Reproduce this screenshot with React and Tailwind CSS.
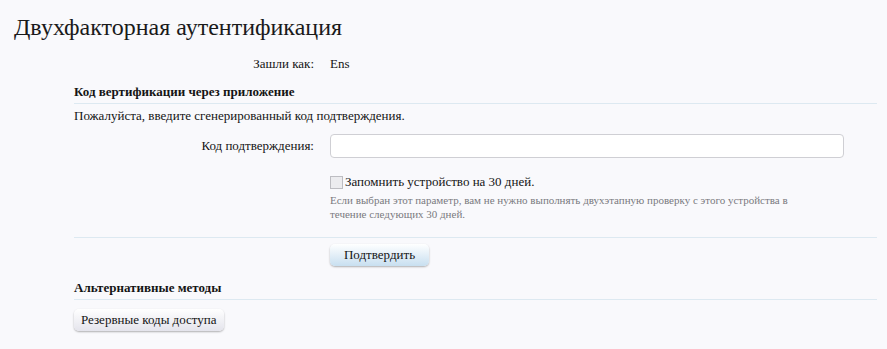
export default function App() {
  return (
    <div className="min-h-[349px] bg-[#f9f9fc] text-[#141414] font-serif pt-[12px]">
      {/* Page title */}
      <h1 className="pl-[14px] text-[24px] leading-[30px] text-[#1a1a1a] [font-family:Times_New_Roman,Liberation_Serif,Tinos,serif]">
        Двухфакторная аутентификация
      </h1>

      <div className="ml-[74px] w-[803px] [font-family:Times_New_Roman,Liberation_Serif,Tinos,serif]">
        {/* Logged in as */}
        <div className="mt-[14px] grid grid-cols-[240px_1fr] gap-x-4 text-[13px] leading-[16px]">
          <div className="text-right">Зашли как:</div>
          <div>Ens</div>
        </div>

        {/* App verification */}
        <h2 className="mt-[12px] font-bold text-[13px] leading-[16px] pb-[3px] border-b border-[#dde9f1]">
          Код вертификации через приложение
        </h2>
        <p className="mt-[4px] text-[13px] leading-[16px]">Пожалуйста, введите сгенерированный код подтверждения.</p>

        <div className="mt-[10px] grid grid-cols-[240px_1fr] gap-x-4 items-center">
          <label className="text-right text-[13px] leading-[16px]">Код подтверждения:</label>
          <input
            type="text"
            className="w-[514px] h-[24px] rounded-[4px] border border-[#cfcfd4] bg-white outline-none"
          />
        </div>

        <div className="mt-[16px] grid grid-cols-[240px_1fr] gap-x-4">
          <div />
          <div>
            <label className="flex items-center gap-[2px] text-[13px] leading-[16px]">
              <span className="w-[13px] h-[13px] border border-[#bdbdc2] bg-[#ececef]" />
              Запомнить устройство на 30 дней.
            </label>
            <p className="mt-[3px] text-[11px] leading-[14px] text-[#7a7a80]">
              Если выбран этот параметр, вам не нужно выполнять двухэтапную проверку с этого устройства в
              <br />
              течение следующих 30 дней.
            </p>
          </div>
        </div>

        <div className="mt-[16px] border-t border-[#dde9f1] pt-[4px] grid grid-cols-[240px_1fr] gap-x-4">
          <div />
          <div>
            <button className="h-[22px] w-[99px] rounded-[5px] text-[13px] bg-gradient-to-b from-[#ffffff] to-[#c8dff0] shadow-[0_1px_2px_rgba(0,0,0,0.3)] text-[#141414]">
              Подтвердить
            </button>
          </div>
        </div>

        {/* Alternative methods */}
        <h2 className="mt-[14px] font-bold text-[13px] leading-[16px] pb-[3px] border-b border-[#dde9f1]">
          Альтернативные методы
        </h2>
        <button className="mt-[9px] h-[22px] px-[7px] rounded-[5px] text-[13px] bg-gradient-to-b from-[#ffffff] to-[#e4e4ec] shadow-[0_1px_2px_rgba(0,0,0,0.3)] text-[#141414]">
          Резервные коды доступа
        </button>
      </div>
    </div>
  );
}
